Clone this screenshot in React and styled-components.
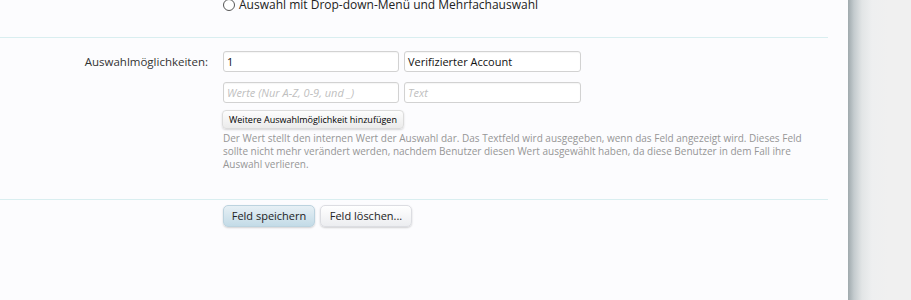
import styled, { createGlobalStyle } from 'styled-components';

const Global = createGlobalStyle`
  html, body {
    margin: 0;
    padding: 0;
    background: #f0f0f0;
    font-family: 'Open Sans', 'Liberation Sans', sans-serif;
    overflow: hidden;
  }
`;

const Page = styled.div`
  display: flex;
  width: 911px;
  height: 300px;
  overflow: hidden;
`;

const Main = styled.div`
  width: 848px;
  flex-shrink: 0;
  background: #fcfcfe;
  padding-right: 20px;
  box-sizing: border-box;
`;

const Shade = styled.div`
  flex: 1;
  background: linear-gradient(
    to right,
    #9fa9ad 0px,
    #c4cbce 6px,
    #e2e5e6 14px,
    #eeeff0 24px,
    #f0f0f0 40px
  );
`;

const Row = styled.div`
  display: grid;
  grid-template-columns: 208px 1fr;
  column-gap: 15px;
  padding: ${p => p.pad || '13px 0 14px'};
  margin-top: ${p => p.shift || '0'};
  border-bottom: ${p => (p.last ? 'none' : '1px solid #d9eef0')};
`;

const Label = styled.div`
  text-align: right;
  font-size: 11.5px;
  color: #333;
  line-height: 21px;
`;

const Field = styled.div`
  display: flex;
  flex-direction: column;
`;

const Radio = styled.label`
  display: flex;
  align-items: center;
  gap: 3px;
  font-size: 12px;
  color: #222;
  line-height: 17px;
`;

const RadioDot = styled.span`
  width: 10px;
  height: 10px;
  border: 1px solid #555;
  border-radius: 50%;
  background: #fff;
  margin-right: 1px;
`;

const Pair = styled.div`
  display: flex;
  gap: 5px;
  margin-bottom: ${p => p.mb || '10px'};
`;

const Input = styled.div`
  width: ${p => p.w}px;
  height: 21px;
  box-sizing: border-box;
  border: 1px solid #d2d2d2;
  border-radius: 3px;
  background: #fff;
  box-shadow: inset 0 1px 1px rgba(0, 0, 0, 0.04);
  padding: 0 3px;
  font-size: 11px;
  line-height: 19px;
  color: ${p => (p.ph ? '#c0c0c0' : '#111')};
  font-style: ${p => (p.ph ? 'italic' : 'normal')};
  white-space: nowrap;
  overflow: hidden;
`;

const SmallButton = styled.div`
  align-self: flex-start;
  height: 19px;
  box-sizing: border-box;
  padding: 0 6px;
  margin-left: -1px;
  border: 1px solid #dcdcdc;
  border-radius: 4px;
  background: linear-gradient(#fdfdfd, #ebebeb);
  box-shadow: 0 1px 2px rgba(0, 0, 0, 0.15);
  font-size: 9px;
  line-height: 17px;
  color: #000;
  white-space: nowrap;
`;

const Help = styled.p`
  margin: 3px 0 0;
  width: 590px;
  font-size: 10px;
  line-height: 13px;
  color: #969696;
`;

const Actions = styled.div`
  display: flex;
  gap: 5px;
  padding-top: 5px;
`;

const Button = styled.div`
  height: 22px;
  width: 92px;
  box-sizing: border-box;
  border-radius: 5px;
  border: 1px solid ${p => (p.primary ? '#bcd3df' : '#dcdde2')};
  background: ${p =>
    p.primary
      ? 'linear-gradient(#e7f0f5, #c3dbe7)'
      : 'linear-gradient(#ffffff, #ecedf0)'};
  box-shadow: 0 1px 2px rgba(0, 0, 0, 0.18);
  font-size: 11px;
  line-height: 20px;
  text-align: center;
  color: #222;
`;

export default function App() {
  return (
    <Page>
      <Global />
      <Main>
        <Row pad="0 0 24px" shift="-4px">
          <Label />
          <Radio>
            <RadioDot />
            Auswahl mit Drop-down-Menü und Mehrfachauswahl
          </Radio>
        </Row>
        <Row pad="13px 0 28px">
          <Label>Auswahlmöglichkeiten:</Label>
          <Field>
            <Pair>
              <Input w={176}>1</Input>
              <Input w={177}>Verifizierter Account</Input>
            </Pair>
            <Pair mb="7px">
              <Input w={176} ph>Werte (Nur A-Z, 0-9, und _)</Input>
              <Input w={177} ph>Text</Input>
            </Pair>
            <SmallButton>Weitere Auswahlmöglichkeit hinzufügen</SmallButton>
            <Help>
              Der Wert stellt den internen Wert der Auswahl dar. Das Textfeld wird
              ausgegeben, wenn das Feld angezeigt wird. Dieses Feld sollte nicht mehr
              verändert werden, nachdem Benutzer diesen Wert ausgewählt haben, da diese
              Benutzer in dem Fall ihre Auswahl verlieren.
            </Help>
          </Field>
        </Row>
        <Row last pad="0">
          <Label />
          <Actions>
            <Button primary>Feld speichern</Button>
            <Button>Feld löschen...</Button>
          </Actions>
        </Row>
      </Main>
      <Shade />
    </Page>
  );
}
